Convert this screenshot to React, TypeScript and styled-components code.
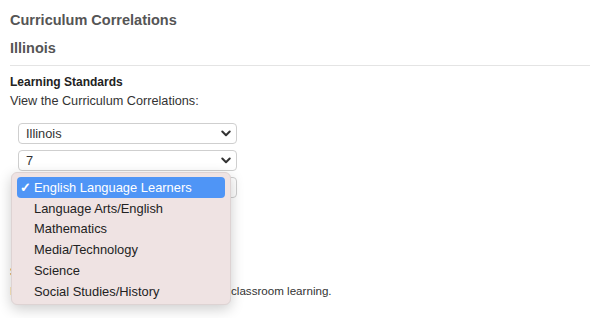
import styled, { createGlobalStyle } from "styled-components";

const GlobalStyle = createGlobalStyle`
  body {
    margin: 0;
    background: #fff;
    font-family: "Liberation Sans", Arial, sans-serif;
    color: #333;
  }
`;

const SUBJECTS = [
  "English Language Learners",
  "Language Arts/English",
  "Mathematics",
  "Media/Technology",
  "Science",
  "Social Studies/History",
];

const Page = styled.div`
  padding: 11px 6px 0 10px;
  width: 596px;
  height: 318px;
  box-sizing: border-box;
  overflow: hidden;
`;

const Title = styled.h1<{ $gap?: number }>`
  margin: 0;
  margin-top: ${(p) => p.$gap ?? 0}px;
  font-size: 14.5px;
  line-height: 19px;
  font-weight: bold;
  color: #555;
`;

const Rule = styled.div`
  height: 1px;
  background: #e4e4e4;
  margin-top: 7px;
`;

const Label = styled.div<{ $bold?: boolean; $gap?: number; $size?: number }>`
  font-size: ${(p) => p.$size ?? (p.$bold ? 12 : 12.7)}px;
  line-height: 18px;
  font-weight: ${(p) => (p.$bold ? "bold" : "normal")};
  color: ${(p) => (p.$bold ? "#222" : "#333")};
  margin-top: ${(p) => p.$gap ?? 0}px;
`;

const Selects = styled.div`
  position: relative;
  display: flex;
  flex-direction: column;
  gap: 6px;
  margin: 13px 0 0 8px;
  width: 219px;
`;

const SelectBox = styled.div`
  height: 21px;
  box-sizing: border-box;
  border: 1px solid #cfcfcf;
  border-radius: 4px;
  background: #fff;
  display: flex;
  align-items: center;
  justify-content: space-between;
  padding: 0 5px 0 7px;
  font-size: 12.8px;
  color: #333;
`;

const Menu = styled.div`
  position: absolute;
  left: -7px;
  top: 49px;
  width: 220px;
  height: 133px;
  box-sizing: border-box;
  padding: 4px 5px;
  background: #efe3e3;
  border: 1px solid #ddd3d3;
  border-radius: 6px;
  box-shadow: 0 4px 14px rgba(0, 0, 0, 0.2);
  display: flex;
  flex-direction: column;
`;

const Item = styled.div<{ $active?: boolean }>`
  height: 20.8px;
  flex-shrink: 0;
  display: flex;
  align-items: center;
  padding-left: 17px;
  position: relative;
  border-radius: 4px;
  font-size: 12.9px;
  color: ${(p) => (p.$active ? "#fff" : "#222")};
  background: ${(p) => (p.$active ? "#4f95f6" : "transparent")};
`;

const Check = styled.span`
  position: absolute;
  left: 3px;
  font-size: 13px;
  font-weight: bold;
`;

const Chevron = () => (
  <svg width="10" height="7" viewBox="0 0 10 7">
    <path d="M1.3 1.5 L5 5.2 L8.7 1.5" fill="none" stroke="#333" strokeWidth="2" strokeLinecap="round" strokeLinejoin="round" />
  </svg>
);

export default function App() {
  return (
    <Page>
      <GlobalStyle />
      <Title>Curriculum Correlations</Title>
      <Title $gap={9}>Illinois</Title>
      <Rule />
      <Label $bold $gap={7}>Learning Standards</Label>
      <Label $gap={1}>View the Curriculum Correlations:</Label>
      <Selects>
        <SelectBox>
          Illinois
          <Chevron />
        </SelectBox>
        <SelectBox>
          7
          <Chevron />
        </SelectBox>
        <SelectBox>
          English Language Learners
          <Chevron />
        </SelectBox>
        <Menu>
          {SUBJECTS.map((s, i) => (
            <Item key={s} $active={i === 0}>
              {i === 0 ? <Check>✓</Check> : null}
              {s}
            </Item>
          ))}
        </Menu>
      </Selects>
      <Label $bold $gap={65}>Standards Support</Label>
      <Label $gap={1} $size={11.6}>
        Integrate these standards into your normal classroom learning.
      </Label>
    </Page>
  );
}
